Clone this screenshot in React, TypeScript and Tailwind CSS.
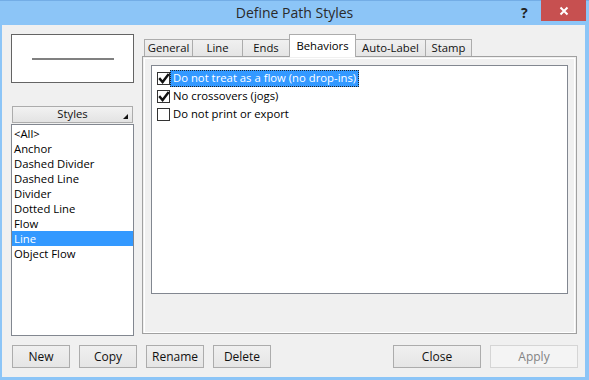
import React from "react";

const FONT = { fontFamily: '"Open Sans", "Liberation Sans", sans-serif' };

const items = ["<All>", "Anchor", "Dashed Divider", "Dashed Line", "Divider", "Dotted Line", "Flow", "Line", "Object Flow"];

function Check() {
  return (
    <svg width="12" height="12" viewBox="0 0 12 12" className="absolute left-[0px] top-[0px]">
      <path d="M2 6 L4.6 9 L10 2" fill="none" stroke="#111" strokeWidth="2.4" strokeLinecap="square" strokeLinejoin="miter" />
    </svg>
  );
}

function CheckRow({ checked, label, selected }: { checked: boolean; label: string; selected?: boolean }) {
  return (
    <div className="flex items-center h-[18px]">
      <div className="relative w-[13px] h-[13px] border border-[#333333] bg-white shrink-0">{checked && <Check />}</div>
      <div
        className={
          selected
            ? "h-[17px] flex items-center px-[2px] bg-[#3399ff] text-white border border-dotted border-[#222]"
            : "ml-[1px] h-[17px] flex items-center px-[2px] text-black"
        }
      >
        {label}
      </div>
    </div>
  );
}

function Btn({ label, w, disabled }: { label: string; w: string; disabled?: boolean }) {
  return (
    <div
      className={
        disabled
          ? `${w} h-[23px] flex items-center justify-center border border-[#d5d5d5] bg-[#f4f4f4] text-[#838383]`
          : `${w} h-[23px] flex items-center justify-center border border-[#acacac] bg-gradient-to-b from-[#f0f0f0] to-[#e5e5e5] text-[#111]`
      }
    >
      {label}
    </div>
  );
}

const tabs = [
  { label: "General", w: "w-[49px]" },
  { label: "Line", w: "w-[51px]" },
  { label: "Ends", w: "w-[48px]" },
  { label: "Behaviors", w: "w-[67px]", sel: true },
  { label: "Auto-Label", w: "w-[71px]" },
  { label: "Stamp", w: "w-[47px]" },
];

export default function App() {
  return (
    <div className="w-[589px] h-[380px] bg-[#8cc5f7] flex flex-col text-[11.3px] relative" style={FONT}>
      {/* title bar */}
      <div className="h-[25px] relative flex items-center justify-center border-t border-[#73ade6]">
        <span className="text-[14px] text-[#2a2a2a] -mt-[1px]">Define Path Styles</span>
        <span className="absolute left-[521px] top-[1px] text-[14px] font-bold text-[#222]">?</span>
        <div className="absolute left-[541px] top-[-1px] w-[45px] h-[21px] bg-[#c75050] flex items-center justify-center">
          <svg width="10" height="10" viewBox="0 0 10 10">
            <path d="M1.5 1.5 L8.5 8.5 M8.5 1.5 L1.5 8.5" stroke="white" strokeWidth="2" />
          </svg>
        </div>
      </div>
      {/* content */}
      <div className="flex-1 ml-[2px] mr-[4px] mb-[3px] bg-[#f0f0f0] flex flex-col">
        <div className="flex pt-[9px] pl-[9px] h-[311px]">
          {/* left column */}
          <div className="w-[123px] flex flex-col">
            <div className="h-[49px] border border-[#646464] bg-white flex items-center">
              <div className="ml-[20px] w-[82px] h-[2px] bg-[#808080]" />
            </div>
            <div className="mt-[23px] mx-[1px] h-[17px] border border-[#acacac] bg-gradient-to-b from-[#f2f2f2] to-[#e3e3e3] relative flex items-center justify-center text-[#111]">
              Styles
              <svg width="5" height="5" viewBox="0 0 5 5" className="absolute right-[4px] bottom-[3px]">
                <polygon points="5,0 5,5 0,5" fill="#111" />
              </svg>
            </div>
            <div className="mt-[1px] h-[212px] border border-[#828790] bg-white pt-[1px]">
              {items.map((it) => (
                <div
                  key={it}
                  className={
                    it === "Line"
                      ? "h-[15px] leading-[15px] pl-[2px] bg-[#3399ff] text-white"
                      : "h-[15px] leading-[15px] pl-[2px] text-black"
                  }
                >
                  {it}
                </div>
              ))}
            </div>
          </div>
          {/* right column */}
          <div className="ml-[8px] w-[435px] flex flex-col">
            <div className="h-[22px] flex items-end pl-[2px]">
              {tabs.map((t, i) =>
                t.sel ? (
                  <div
                    key={t.label}
                    className={`${t.w} h-[23px] -mb-[1px] -ml-[1px] relative z-10 bg-white border border-b-0 border-[#acacac] flex items-center justify-center text-black`}
                  >
                    {t.label}
                  </div>
                ) : (
                  <div
                    key={t.label}
                    className={`${t.w} h-[17px] ${i === 0 ? "" : "-ml-[1px]"} border border-b-0 border-[#acacac] bg-gradient-to-b from-[#f0f0f0] to-[#e5e5e5] flex items-center justify-center text-[#111]`}
                  >
                    {t.label}
                  </div>
                )
              )}
            </div>
            <div className="h-[278px] border border-[#a0a0a0] bg-[#f0f0f0] pl-[1px] pt-[1px] pr-[1px]">
              <div className="h-full border border-white pl-[6px] pt-[6px]">
                <div className="w-[417px] h-[229px] border border-[#828790] bg-white pl-[5px] pt-[3px]">
                  <CheckRow checked label="Do not treat as a flow (no drop-ins)" selected />
                  <CheckRow checked label="No crossovers (jogs)" />
                  <CheckRow checked={false} label="Do not print or export" />
                </div>
              </div>
            </div>
          </div>
        </div>
        {/* buttons */}
        <div className="flex items-center pl-[10px] pr-[7px] mt-[9px] text-[12px]">
          <div className="flex gap-[9px]">
            <Btn label="New" w="w-[58px]" />
            <Btn label="Copy" w="w-[58px]" />
            <Btn label="Rename" w="w-[58px]" />
            <Btn label="Delete" w="w-[58px]" />
          </div>
          <div className="ml-auto flex gap-[9px]">
            <Btn label="Close" w="w-[88px]" />
            <Btn label="Apply" w="w-[88px]" disabled />
          </div>
        </div>
      </div>
    </div>
  );
}
